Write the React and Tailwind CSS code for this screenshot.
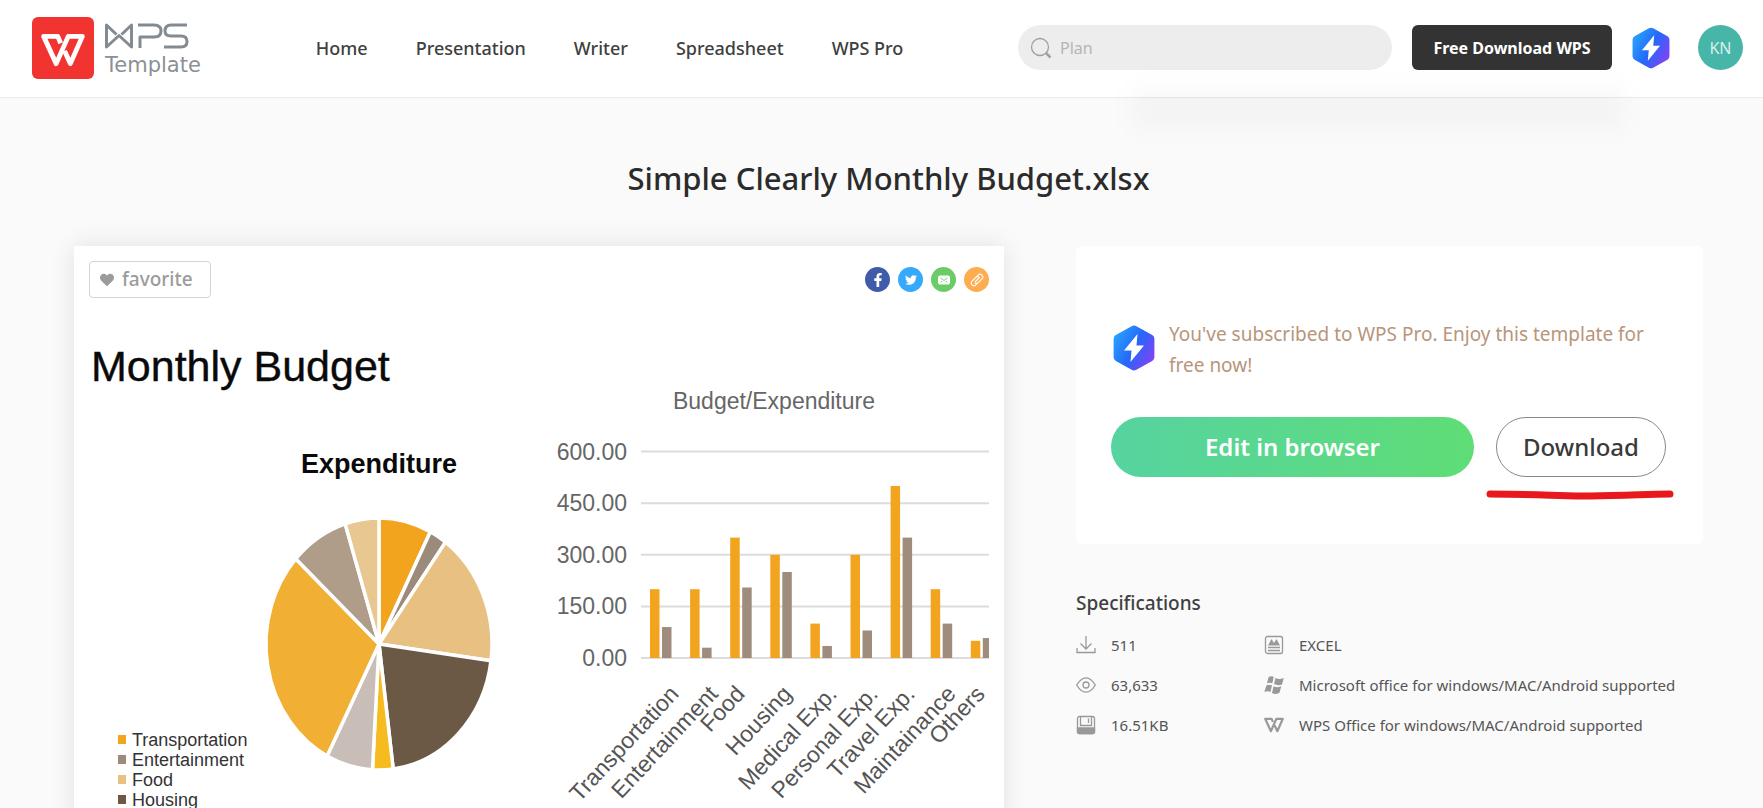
import { FaHeart, FaFacebookF, FaTwitter } from "react-icons/fa";

const pie = [
  [90, "#f2a41f"], [30, "#9c8b7a"], [205, "#e8c182"], [250, "#6b5945"], [35, "#f6bb1f"],
  [80, "#c8beb7"], [350, "#f1af33"], [100, "#af9d8a"], [58, "#e8c791"],
];

const bars = [
  ["Transportation", 200, 90, 591], ["Entertainment", 200, 30, 630], ["Food", 350, 205, 657],
  ["Housing", 300, 250, 704], ["Medical Exp.", 100, 35, 749], ["Personal Exp.", 300, 80, 790],
  ["Travel Exp.", 500, 350, 827], ["Maintainance", 200, 100, 868], ["Others", 50, 58, 897],
];

const legend = [
  ["Transportation", "#f2a41f"], ["Entertainment", "#9c8b7a"], ["Food", "#e8c182"], ["Housing", "#6b5945"],
];

function PieChart() {
  const cx = 290, cy = 333, rx = 113, ry = 126;
  const total = pie.reduce((s, [v]) => s + v, 0);
  let acc = 0;
  const point = (v) => {
    const a = (v / total) * 2 * Math.PI;
    return `${cx + rx * Math.sin(a)} ${cy - ry * Math.cos(a)}`;
  };
  return pie.map(([v, color], i) => {
    const start = point(acc);
    acc += v;
    return (
      <path key={i} d={`M${cx} ${cy}L${start}A${rx} ${ry} 0 0 1 ${point(acc)}Z`} fill={color} stroke="#fff" strokeWidth="3.5" strokeLinejoin="round" />
    );
  });
}

function BarChart() {
  return (
    <g>
      {[600, 450, 300, 150, 0].map((v) => (
        <g key={v}>
          <path d={`M552 ${347 - v * 0.344}H900`} stroke="#dcdcdc" strokeWidth="2" />
          <text x="538" y={355 - v * 0.344} textAnchor="end" fontSize="23" fill="#666">{v}.00</text>
        </g>
      ))}
      {bars.map(([name, budget, spent, x], i) => (
        <g key={name}>
          <rect x={561 + i * 40.1} y={347 - budget * 0.344} width="9.5" height={budget * 0.344} fill="#f2a41f" />
          <rect x={573 + i * 40.1} y={347 - spent * 0.344} width="9.5" height={spent * 0.344} fill="#9f8c7c" />
          <text transform={`translate(${x} 384) rotate(-47)`} textAnchor="end" fontSize="23" fill="#555">{name}</text>
        </g>
      ))}
    </g>
  );
}

function Preview() {
  return (
    <svg viewBox="0 0 900 520" className="mt-[13px] block w-full font-['Liberation_Sans',sans-serif]" role="img" aria-label="Monthly budget template preview">
      <text x="2" y="70" fontSize="43" fill="#0a0a0a" stroke="#0a0a0a" strokeWidth=".4">Monthly Budget</text>
      <text x="290" y="162" textAnchor="middle" fontSize="27" fontWeight="700" fill="#0a0a0a">Expenditure</text>
      <text x="685" y="98" textAnchor="middle" fontSize="23" fill="#666">Budget/Expenditure</text>
      <PieChart />
      {legend.map(([name, color], i) => (
        <g key={name}>
          <rect x="29" y={424 + i * 20} width="8" height="9" fill={color} />
          <text x="43" y={435 + i * 20} fontSize="18" fill="#333">{name}</text>
        </g>
      ))}
      <BarChart />
    </svg>
  );
}

function ProBadge({ className, id }) {
  return (
    <svg viewBox="0 0 42 46" className={className} aria-hidden="true">
      <defs>
        <linearGradient id={id} x1="0" y1="0.2" x2="1" y2="0.8">
          <stop offset="0" stopColor="#2ba5fb" />
          <stop offset="0.5" stopColor="#2468fb" />
          <stop offset="1" stopColor="#8a3ff5" />
        </linearGradient>
      </defs>
      <path d="M18.6 1.2Q21 -.2 23.4 1.2L39.2 10Q41.400 11.300 41.400 13.800V32.200Q41.400 34.700 39.200 36L23.400 44.800Q21 46.200 18.600 44.800L2.800 36Q.6 34.700 .6 32.200V13.800Q.6 11.300 2.800 10Z" fill={`url(#${id})`} />
      <path d="M24.500 9L11 25.500H18.500L17.500 37L31 20.500H23.500Z" fill="#fff" />
    </svg>
  );
}

function WMark({ className }) {
  return (
    <svg viewBox="0 0 42 32" className={className} fill="none" stroke="currentColor" strokeWidth="4.600" strokeLinejoin="round" aria-hidden="true">
      <path d="M18.800 9.500L16 3H2.500L14.500 29L26 3H39.500L28 29L22.500 17" />
    </svg>
  );
}

function Logo() {
  return (
    <a href="#" className="flex items-center gap-[11px]" aria-label="WPS Template">
      <span className="flex h-[62px] w-[62px] items-center justify-center rounded-md bg-[#f23431] text-white">
        <WMark className="mt-1 h-[34px] w-[44px]" />
      </span>
      <span className="flex flex-col gap-1 pt-1 text-[#8b9096]">
        <svg viewBox="0 0 84 26" className="h-[26px] w-[84px]" fill="none" stroke="#838b92" strokeWidth="3" strokeLinejoin="round" aria-hidden="true">
          <path d="M11.500 11.500L1.500 2V24L14 12.500L26.500 24V2L16.500 11.500" />
          <path d="M33 2H49Q56 2 56 8Q56 14 49 14H35V25" />
          <path d="M82 2H66Q60 2 60 8Q60 13 66 13H76Q82 13 82 18.500Q82 24 76 24H59" />
        </svg>
        <span className="font-['DejaVu_Sans',sans-serif] text-[21px] leading-6">Template</span>
      </span>
    </a>
  );
}

function Header() {
  return (
    <header className="relative flex h-[98px] items-center border-b border-[#e9e9e9] bg-white pr-5 pb-0.5 pl-8">
      <Logo />
      <nav className="ml-[115px] flex gap-12 text-lg font-medium whitespace-nowrap text-[#404040]">
        {["Home", "Presentation", "Writer", "Spreadsheet", "WPS Pro"].map((t) => (
          <a key={t} href="#">{t}</a>
        ))}
      </nav>
      <div className="ml-auto flex items-center">
        <div className="flex h-[45px] w-[374px] items-center gap-2 rounded-full bg-[#ededed] pl-3">
          <svg viewBox="0 0 22 22" className="h-[22px] w-[22px]" fill="none" stroke="#a0a0a0" aria-hidden="true">
            <circle cx="10" cy="10" r="8.500" strokeWidth="1.300" />
            <path d="M16 16L20.500 20.500" strokeWidth="2.500" />
          </svg>
          <input type="search" aria-label="Search templates" placeholder="Plan" className="w-72 bg-transparent text-base text-[#555] outline-none placeholder:text-[#b5b5b5]" />
        </div>
        <button className="ml-5 h-[45px] w-[200px] rounded-md bg-[#333] text-base font-bold whitespace-nowrap text-white">Free Download WPS</button>
        <ProBadge id="badge-small" className="ml-5 h-[42px] w-[38px]" />
        <button className="ml-7 h-[45px] w-[45px] rounded-full bg-[#48b5a9] text-base text-[#d8f0ed]">KN</button>
      </div>
      <div className="pointer-events-none absolute top-[88px] right-[140px] h-10 w-[490px] bg-black/[0.026] blur-[12px]" />
    </header>
  );
}

const socials = [
  ["Facebook", "bg-[#3f5ba9]", <FaFacebookF className="h-3.5 w-3.5" />],
  ["Twitter", "bg-[#36a9fd]", <FaTwitter className="h-3 w-3" />],
  ["Email", "bg-[#6bcb68]", (
    <svg viewBox="0 0 12 10" className="h-[10px] w-3" aria-hidden="true">
      <rect width="12" height="9" y=".5" rx="2" fill="#fff" />
      <path d="M2.500 3L6 5.500L9.500 3M2.500 7.500L4 6M9.500 7.500L8 6" fill="none" stroke="#6bcb68" strokeWidth=".9" />
    </svg>
  )],
  ["Copy link", "bg-[#fdac50]", (
    <svg viewBox="0 0 24 24" className="h-3.5 w-3.5" fill="none" stroke="#fff" strokeWidth="2" strokeLinecap="round" aria-hidden="true">
      <path d="M9 15L16 8M10 7.500L14 3.500a4.500 4.500 0 0 1 6.500 6.500L14 16.500a4.500 4.500 0 0 1-5 1M14 16.500L10 20.500a4.500 4.500 0 0 1-6.500-6.500L10 7.500a4.500 4.500 0 0 1 5-1" />
    </svg>
  )],
];

const icons = {
  download: <path d="M10 1V13.500M4.500 8.500L10 14L15.500 8.500M1 13V17.500H19V13" />,
  eye: <><path d="M.7 10Q5 2.800 10 2.800T19.300 10Q15 17.200 10 17.200T.7 10Z" /><circle cx="10" cy="10" r="3" /></>,
  disk: <><rect x="1.500" y="1.500" width="17" height="17" rx="2" /><path d="M1.500 13H18.500V17Q18.500 18.500 17 18.500H3Q1.500 18.500 1.500 17Z" fill="currentColor" /><path d="M4.500 2V10.500H15.500V2M12.500 3.500V8" /></>,
  doc: <><rect x="1.500" y="1.500" width="17" height="17" rx="2" /><path d="M4 10.500L7.500 4L10 8L12.500 4L16 10.500Z" fill="currentColor" stroke="none" /><path d="M4 12.500H16M4 15.500H16" /></>,
  windows: <path stroke="none" fill="currentColor" d="M4.500 2.200Q7 .5 9.800 1.800L8.300 8.300Q6 7 3 8.300ZM11.500 3Q15 5 19.800 3L18 9.500Q14 11 10 9ZM2.500 10.300Q5 9 8 10.300L6.500 17Q4 15.500.3 17ZM9.500 11.300Q13 13 17.300 11.300L15.500 17.800Q12 20 8 18Z" />,
};

function SpecIcon({ name }) {
  if (name === "wps") return <WMark className="h-4 w-5 text-[#999]" />;
  return (
    <svg viewBox="0 0 20 20" className="h-5 w-5 text-[#999]" fill="none" stroke="currentColor" strokeWidth="1.300" aria-hidden="true">{icons[name]}</svg>
  );
}

const specs = [
  ["download", "511"], ["doc", "EXCEL"],
  ["eye", "63,633"], ["windows", "Microsoft office for windows/MAC/Android supported"],
  ["disk", "16.51KB"], ["wps", "WPS Office for windows/MAC/Android supported"],
];

export default function App() {
  return (
    <div className="h-screen overflow-hidden bg-[#fafafa] font-['Noto_Sans','Open_Sans',sans-serif]">
      <Header />
      <main className="pr-[60px] pl-[74px]">
        <h1 className="pt-14 text-center text-[31px] leading-[48px] font-medium text-[#2b2b2b]">Simple Clearly Monthly Budget.xlsx</h1>
        <div className="mt-11 flex items-start gap-[72px]">
          <section className="min-w-0 flex-1 bg-white px-[15px] py-[15px] shadow-[0_0_24px_rgba(0,0,0,0.10)]">
            <div className="flex items-start justify-between">
              <button className="flex h-[37px] w-[122px] items-center gap-2 rounded-sm border border-[#d4d4d4] pl-[10px] text-[19px] font-medium text-[#9b9b9b]">
                <FaHeart className="h-[14px] w-[14px]" />
                favorite
              </button>
              <div className="mt-1.5 flex gap-2">
                {socials.map(([name, color, icon]) => (
                  <button key={name} aria-label={name} className={`flex h-[25px] w-[25px] items-center justify-center rounded-full text-white ${color}`}>{icon}</button>
                ))}
              </div>
            </div>
            <Preview />
          </section>
          <aside className="w-[627px]">
            <section className="rounded-md bg-white px-[35px] pt-[73px] pb-[67px]">
              <div className="flex items-start gap-[14px]">
                <ProBadge id="badge-large" className="mt-1.5 ml-0.5 h-[46px] w-[42px] shrink-0" />
                <p className="text-[19px] leading-[31px] text-[#b8957b]">You've subscribed to WPS Pro. Enjoy this template for free now!</p>
              </div>
              <div className="mt-9 flex gap-[22px]">
                <button className="h-[60px] w-[363px] rounded-full bg-linear-to-r from-[#56d3a0] to-[#5fdd75] text-2xl font-semibold text-white">Edit in browser</button>
                <div className="relative">
                  <button className="h-[60px] w-[170px] rounded-full border border-[#888] text-2xl font-medium text-[#3a3a3a]">Download</button>
                  <svg viewBox="0 0 188 12" className="absolute top-[72px] -left-[10px] h-3 w-[188px]" fill="none" stroke="#e8191c" strokeWidth="7" strokeLinecap="round" aria-hidden="true">
                    <path d="M4 5C60 5 70 7.500 104 7C140 7 160 5 184 5" />
                  </svg>
                </div>
              </div>
            </section>
            <h2 className="mt-[43px] text-[19px] leading-8 font-medium text-[#404040]">Specifications</h2>
            <ul className="mt-1.5 grid grid-cols-[188px_1fr] text-[15px] leading-10 whitespace-nowrap text-[#555]">
              {specs.map(([icon, text]) => (
                <li key={text} className="flex items-center gap-[15px]"><SpecIcon name={icon} />{text}</li>
              ))}
            </ul>
          </aside>
        </div>
      </main>
    </div>
  );
}
